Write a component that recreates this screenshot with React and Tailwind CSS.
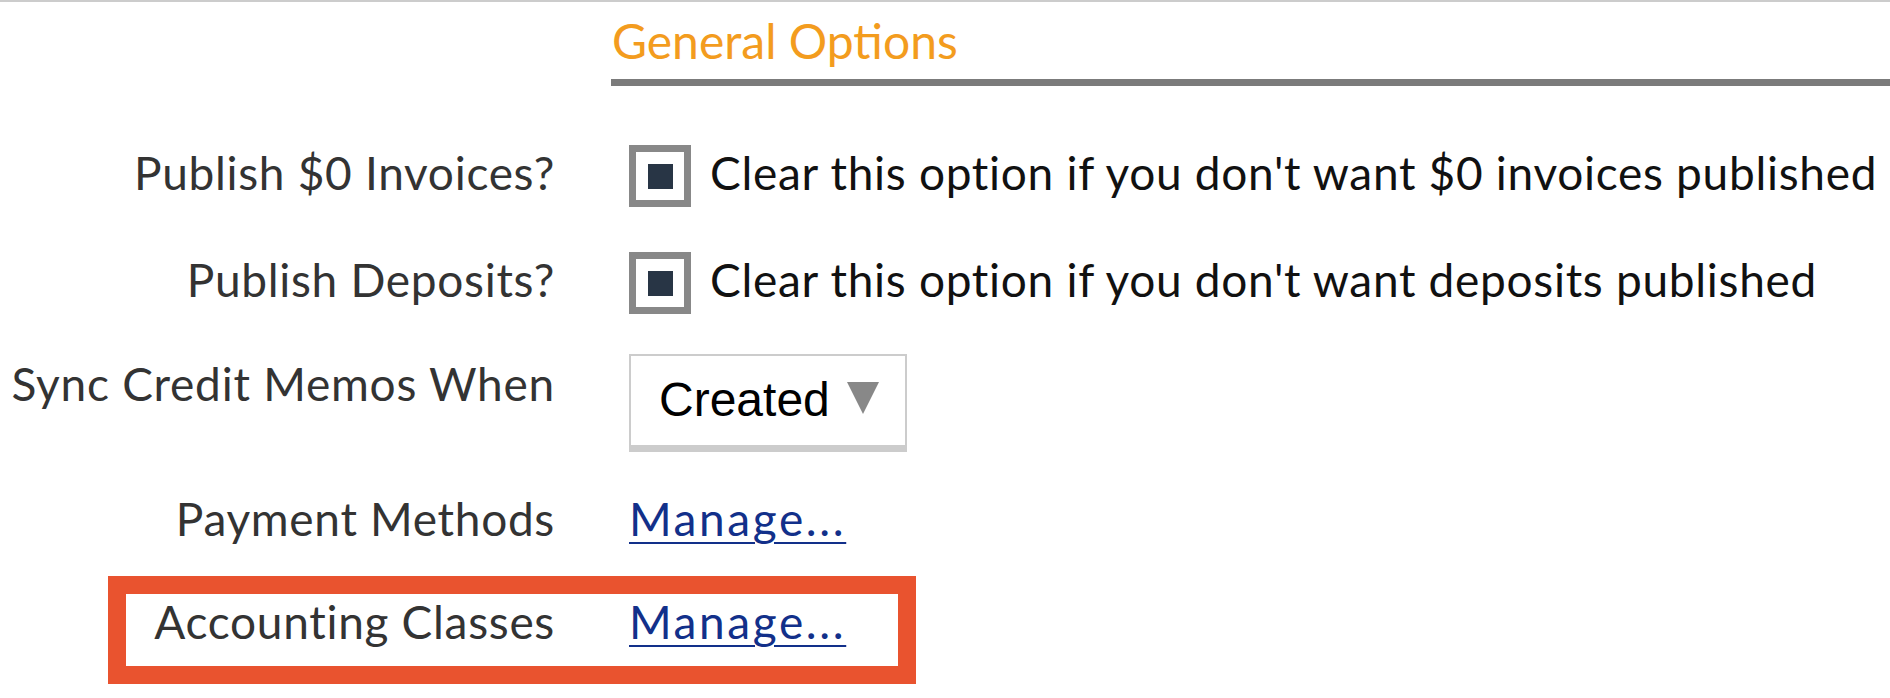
import React from "react";

const font = { fontFamily: "Lato, 'Noto Sans', sans-serif" };

const Checkbox = () => (
  <div className="w-[62px] h-[62px] shrink-0 border-[7px] border-[#888888] bg-white flex items-center justify-center">
    <div className="w-[25px] h-[25px] bg-[#283545]" />
  </div>
);

const ManageLink = () => (
  <a
    href="#"
    className="leading-none text-[46px] tracking-[2.6px] text-[#12308a] underline decoration-2 underline-offset-[6px]"
  >
    Manage...
  </a>
);

const App = () => {
  return (
    <div
      className="w-[1890px] h-[698px] bg-white border-t-2 border-[#cccccc] overflow-hidden"
      style={font}
    >
      {/* section header */}
      <div className="ml-[611px]">
        <h2 className="mt-[15px] leading-none text-[48px] text-[#f39c1e] pl-[1px]">
          General Options
        </h2>
        <div className="mt-[14px] h-[7px] bg-[#7b7b7b]" />
      </div>

      {/* Publish $0 invoices */}
      <div className="mt-[59px] flex items-start tracking-[0.7px]">
        <div className="w-[555px] mt-[5px] text-right leading-none text-[46px] text-[#333333]">
          Publish $0 Invoices?
        </div>
        <div className="ml-[74px] flex items-start gap-[19px]">
          <Checkbox />
          <span className="mt-[5px] leading-none text-[46px] text-[#111111] whitespace-nowrap">
            Clear this option if you don't want $0 invoices published
          </span>
        </div>
      </div>

      {/* Publish deposits */}
      <div className="mt-[45px] flex items-start tracking-[0.7px]">
        <div className="w-[555px] mt-[5px] text-right leading-none text-[46px] text-[#333333]">
          Publish Deposits?
        </div>
        <div className="ml-[74px] flex items-start gap-[19px]">
          <Checkbox />
          <span className="mt-[5px] leading-none text-[46px] text-[#111111] whitespace-nowrap">
            Clear this option if you don't want deposits published
          </span>
        </div>
      </div>

      {/* Sync credit memos */}
      <div className="mt-[40px] flex items-start">
        <div className="w-[555px] mt-[7px] text-right leading-none text-[46px] tracking-[0.75px] text-[#333333] whitespace-nowrap">
          Sync Credit Memos When
        </div>
        <div className="ml-[74px] w-[278px] h-[98px] border-2 border-b-[7px] border-[#cccccc] bg-white flex items-start pt-[20px] pl-[28px]">
          <span
            className="leading-none text-[48px] text-black"
            style={{ fontFamily: "'Liberation Sans', Arial, sans-serif" }}
          >
            Created
          </span>
          <svg className="ml-[17px] mt-[6px]" width="32" height="32" viewBox="0 0 32 32">
            <polygon points="0,0 32,0 16,32" fill="#888888" />
          </svg>
        </div>
      </div>

      {/* Payment methods */}
      <div className="mt-[44px] flex items-start">
        <div className="w-[555px] text-right leading-none text-[46px] tracking-[0.7px] text-[#333333]">
          Payment Methods
        </div>
        <div className="ml-[74px]">
          <ManageLink />
        </div>
      </div>

      {/* Accounting classes (highlighted) */}
      <div className="mt-[34px] ml-[108px] w-[808px] h-[108px] border-[18px] border-[#e9532f] flex items-start pt-[5px]">
        <div className="w-[429px] text-right leading-none text-[46px] tracking-[0.7px] text-[#333333]">
          Accounting Classes
        </div>
        <div className="ml-[74px]">
          <ManageLink />
        </div>
      </div>
    </div>
  );
};

export default App;
